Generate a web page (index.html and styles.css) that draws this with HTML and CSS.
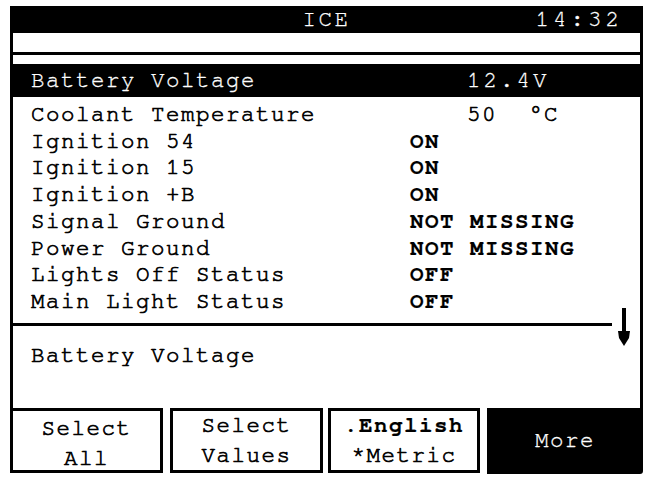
FILE: index.html
```html
<!DOCTYPE html>
<html lang="en">
<head>
    <meta charset="UTF-8">
    <meta name="viewport" content="width=device-width, initial-scale=1.0">
    <title>ICE</title>
    <link rel="stylesheet" href="styles.css">
</head>
<body>
    <div class="screen">
        <!-- Title bar -->
        <div class="titlebar">
            <span></span>
            <span class="title">ICE</span>
            <span class="clock">14:32</span>
        </div>
        <div class="strip strip-a"></div>
        <div class="strip strip-b"></div>

        <!-- Selected parameter -->
        <div class="selected">
            <span>Battery Voltage</span>
            <span class="sel-value">12.4V</span>
        </div>

        <!-- Parameter list -->
        <div class="list">
            <div class="row"><span>Coolant Temperature</span><span class="value value-temp">50<span class="unit">&deg;C</span></span></div>
            <div class="row"><span>Ignition 54</span><span class="value">ON</span></div>
            <div class="row"><span>Ignition 15</span><span class="value">ON</span></div>
            <div class="row"><span>Ignition +B</span><span class="value">ON</span></div>
            <div class="row"><span>Signal Ground</span><span class="value">NOT MISSING</span></div>
            <div class="row"><span>Power Ground</span><span class="value">NOT MISSING</span></div>
            <div class="row"><span>Lights Off Status</span><span class="value">OFF</span></div>
            <div class="row"><span>Main Light Status</span><span class="value">OFF</span></div>
        </div>
        <div class="divider"></div>

        <!-- Description -->
        <div class="desc">Battery Voltage</div>

        <!-- Scroll arrow -->
        <svg class="arrow" width="14" height="40" viewBox="0 0 14 40">
            <rect x="5" y="0" width="4" height="28" fill="#000"/>
            <path d="M1 23 L13 23 L12 30 L7 38 L2 30 Z" fill="#000"/>
        </svg>

        <!-- Soft keys -->
        <div class="keys">
            <div class="key key-1">Select<br>All</div>
            <div class="key key-2">Select<br>Values</div>
            <div class="key key-3"><b>.English</b><br>*Metric</div>
            <div class="key key-more">More</div>
        </div>
    </div>
</body>
</html>
```

FILE: styles.css
```css
/* Basic styling */
body {
    margin: 0;
    background-color: #fff;
}
.screen {
    position: relative;
    margin: 6px 0 0 10px;
    width: 633px;
    background-color: #000;
    font-family: "Nimbus Mono PS", "FreeMono", "Liberation Mono", monospace;
    font-size: 22.5px;
    letter-spacing: 1.5px;
    color: #000;
    -webkit-text-stroke: 0.7px #000;
}
/* Title bar */
.titlebar {
    height: 27px;
    display: grid;
    grid-template-columns: 1fr auto 1fr;
    align-items: center;
    color: #fff;
    -webkit-text-stroke: 0.3px #fff;
}
.title {
    letter-spacing: 2.5px;
}
.clock {
    justify-self: end;
    padding-right: 20px;
    letter-spacing: 4px;
}
.strip {
    margin: 0 3px;
    background-color: #fff;
}
.strip-a {
    height: 19px;
    margin-bottom: 3px;
}
.strip-b {
    height: 9px;
}
/* Selected row */
.selected {
    height: 32px;
    margin-bottom: 1px;
    display: grid;
    grid-template-columns: 436px auto;
    align-items: center;
    padding-left: 21px;
    color: #fff;
    -webkit-text-stroke: 0.3px #fff;
}
.sel-value {
    letter-spacing: 3px;
}
/* List */
.list {
    margin: 0 3px;
    background-color: #fff;
    padding: 4px 0 8px 18px;
}
.row {
    height: 26.75px;
    display: grid;
    grid-template-columns: 379px auto;
    align-items: center;
}
.value {
    font-weight: bold;
    -webkit-text-stroke: 0.2px #000;
}
.value-temp {
    padding-left: 57px;
    font-weight: normal;
    -webkit-text-stroke: 0.7px #000;
}
.unit {
    padding-left: 32px;
}
.divider {
    margin: 0 3px;
    height: 3px;
    background: linear-gradient(to right, #000 599px, #fff 599px);
}
/* Description */
.desc {
    margin: 0 3px;
    height: 82px;
    box-sizing: border-box;
    padding: 18px 0 0 18px;
    background-color: #fff;
}
.arrow {
    position: absolute;
    left: 607px;
    top: 302px;
}
/* Soft keys */
.keys {
    height: 67px;
    display: flex;
    background-color: #fff;
}
.key {
    box-sizing: border-box;
    height: 65px;
    border: 3px solid #000;
    text-align: center;
    line-height: 30px;
    padding-top: 3px;
}
.key b {
    -webkit-text-stroke: 0.2px #000;
}
.key-1 {
    width: 153px;
    margin-right: 7px;
}
.key-2 {
    width: 153px;
    margin-right: 5px;
    padding-top: 0;
}
.key-3 {
    width: 152px;
    margin-right: 7px;
    padding-top: 0;
}
.key-more {
    width: 156px;
    height: 66px;
    background-color: #000;
    color: #fff;
    line-height: 60px;
    padding-top: 0;
    border-bottom-right-radius: 3px;
    -webkit-text-stroke: 0.3px #fff;
}
```
